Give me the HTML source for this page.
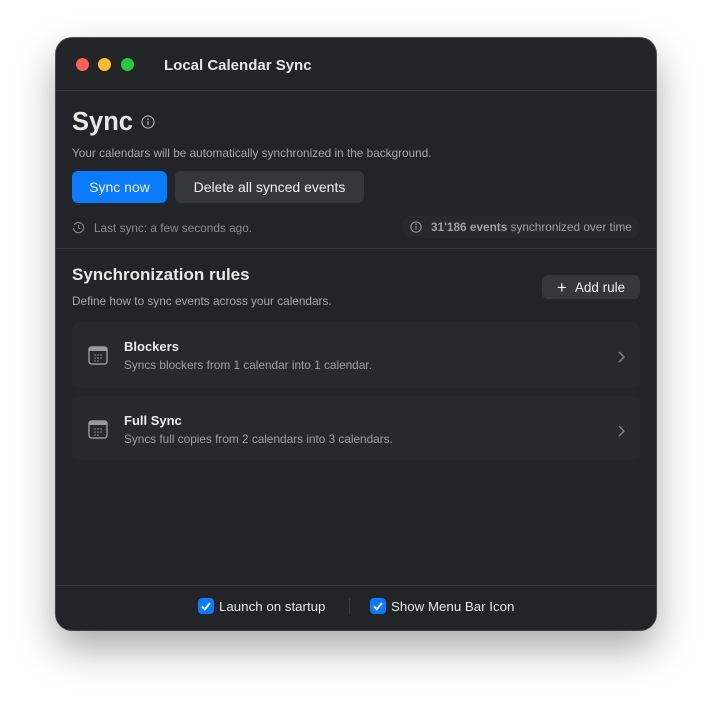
<!DOCTYPE html>
<html><head><style>
body{margin:0;width:712px;height:704px;background:#fff;font-family:"Liberation Sans",sans-serif;position:relative;overflow:hidden}
.win{position:absolute;left:56px;top:38px;width:600px;height:592px;background:#232427;border-radius:16px;box-shadow:0 18px 40px rgba(0,0,0,.35),0 0 0 1px #555;overflow:hidden}
.a{position:absolute;white-space:nowrap}
.dot{position:absolute;top:20px;width:13px;height:13px;border-radius:50%}
.hr{position:absolute;left:0;right:0;height:1px;background:#37383b}
.btn{position:absolute;border-radius:6px;color:#f0f0f0;font-size:14px;text-align:center;line-height:32px}
.card{position:absolute;left:16px;width:568px;background:#27292c;border-radius:8px}
.cb{display:inline-block;width:16px;height:16px;background:#0a7aff;border-radius:4px;vertical-align:-3px;margin-right:5px;position:relative}
.s{font-size:11.8px}
</style></head><body>
<div class="win">
<div class="dot" style="left:20px;background:#fe5f57"></div>
<div class="dot" style="left:42px;background:#febc2e"></div>
<div class="dot" style="left:65px;background:#28c840"></div>
<div class="a" style="left:108px;top:19px;font-size:15px;font-weight:bold;color:#e6e6e6">Local Calendar Sync</div>
<div class="hr" style="top:52px"></div>
<div class="a" style="left:16px;top:70px;font-size:25.5px;font-weight:bold;color:#e8e8e8">Sync</div>
<svg class="a" style="left:85px;top:77px" width="14" height="14" viewBox="0 0 14 14"><circle cx="7" cy="7" r="6" fill="none" stroke="#aaa" stroke-width="1.2"/><path d="M7 6v4" stroke="#aaa" stroke-width="1.3"/><circle cx="7" cy="4.2" r=".8" fill="#aaa"/></svg>
<div class="a s" style="left:16px;top:108px;color:#a8a8a8">Your calendars will be automatically synchronized in the background.</div>
<div class="btn" style="left:16px;top:133px;width:95px;background:#0a7aff">Sync now</div>
<div class="btn" style="left:119px;top:133px;width:189px;background:#36373a">Delete all synced events</div>
<svg class="a" style="left:16px;top:183px" width="13" height="13" viewBox="0 0 14 14"><path d="M2.5 4A5.5 5.5 0 1 1 1.5 7.5" fill="none" stroke="#888" stroke-width="1.2"/><path d="M7 4v3.3l2 1.5" fill="none" stroke="#888" stroke-width="1.2"/></svg>
<div class="a s" style="left:38px;top:183px;color:#8c8c8c">Last sync: a few seconds ago.</div>
<div class="a" style="left:346px;top:178px;width:238px;height:22px;background:#27292c;border-radius:11px"></div>
<svg class="a" style="left:354px;top:183px" width="12" height="12" viewBox="0 0 14 14"><circle cx="7" cy="7" r="6" fill="none" stroke="#999" stroke-width="1.2"/><path d="M7 6v4" stroke="#999" stroke-width="1.3"/><circle cx="7" cy="4.2" r=".8" fill="#999"/></svg>
<div class="a s" style="left:375px;top:182px;color:#a0a0a0"><b>31'186 events</b> synchronized over time</div>
<div class="hr" style="top:210px"></div>
<div class="a" style="left:16px;top:227px;font-size:17px;font-weight:bold;color:#e8e8e8">Synchronization rules</div>
<div class="a s" style="left:16px;top:256px;color:#a8a8a8">Define how to sync events across your calendars.</div>
<div class="btn" style="left:486px;top:237px;width:98px;height:24px;line-height:25px;background:#36373a;font-size:13.5px"><span style="font-size:17px;vertical-align:-1px;margin-right:8px">+</span>Add rule</div>
<div class="card" style="top:284px;height:66px"></div>
<div class="card" style="top:358px;height:64px"></div>
<svg class="a" style="left:32px;top:308px" width="20" height="19" viewBox="0 0 20 19"><rect x="1" y="1" width="18" height="17" rx="2.5" fill="none" stroke="#999" stroke-width="1.4"/><rect x="1" y="1" width="18" height="4" fill="#999"/><g fill="#999"><circle cx="7" cy="9" r=".8"/><circle cx="10" cy="9" r=".8"/><circle cx="13" cy="9" r=".8"/><circle cx="7" cy="12" r=".8"/><circle cx="10" cy="12" r=".8"/><circle cx="13" cy="12" r=".8"/><circle cx="7" cy="15" r=".8"/><circle cx="10" cy="15" r=".8"/></g></svg>
<svg class="a" style="left:32px;top:382px" width="20" height="19" viewBox="0 0 20 19"><rect x="1" y="1" width="18" height="17" rx="2.5" fill="none" stroke="#999" stroke-width="1.4"/><rect x="1" y="1" width="18" height="4" fill="#999"/><g fill="#999"><circle cx="7" cy="9" r=".8"/><circle cx="10" cy="9" r=".8"/><circle cx="13" cy="9" r=".8"/><circle cx="7" cy="12" r=".8"/><circle cx="10" cy="12" r=".8"/><circle cx="13" cy="12" r=".8"/><circle cx="7" cy="15" r=".8"/><circle cx="10" cy="15" r=".8"/></g></svg>
<div class="a" style="left:68px;top:301px;font-size:13px;font-weight:bold;color:#ececec">Blockers</div>
<div class="a s" style="left:68px;top:320px;color:#a0a0a0">Syncs blockers from 1 calendar into 1 calendar.</div>
<div class="a" style="left:68px;top:375px;font-size:13px;font-weight:bold;color:#ececec">Full Sync</div>
<div class="a s" style="left:68px;top:394px;color:#a0a0a0">Syncs full copies from 2 calendars into 3 calendars.</div>
<svg class="a" style="left:561px;top:313px" width="8" height="12"><path d="M2 1l5 5-5 5" fill="none" stroke="#888" stroke-width="1.4"/></svg>
<svg class="a" style="left:561px;top:387px" width="8" height="12"><path d="M2 1l5 5-5 5" fill="none" stroke="#888" stroke-width="1.4"/></svg>
<div class="hr" style="top:547px"></div>
<div class="a" style="left:142px;top:560px;font-size:13.3px;color:#e6e6e6"><span class="cb"><svg width="16" height="16" style="position:absolute;left:0;top:0"><path d="M4 8.5l2.8 2.8L12 5" fill="none" stroke="#fff" stroke-width="1.9"/></svg></span>Launch on startup</div>
<div class="a" style="left:293px;top:560px;width:1px;height:16px;background:#3e3f42"></div>
<div class="a" style="left:314px;top:560px;font-size:13.3px;color:#e6e6e6"><span class="cb"><svg width="16" height="16" style="position:absolute;left:0;top:0"><path d="M4 8.5l2.8 2.8L12 5" fill="none" stroke="#fff" stroke-width="1.9"/></svg></span>Show Menu Bar Icon</div>
</div>
</body></html>
